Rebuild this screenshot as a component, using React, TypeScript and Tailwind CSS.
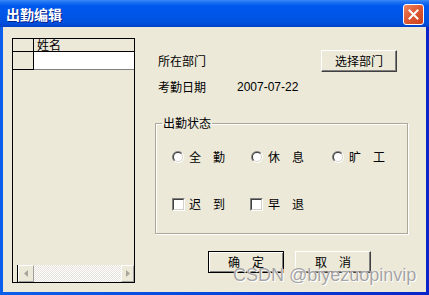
import React from "react";

const cjk = { fontFamily: '"Noto Sans CJK SC", "Noto Sans", sans-serif' };

function Btn({ children, def, className = "" }: { children: React.ReactNode; def?: boolean; className?: string }) {
  return (
    <div
      className={
        "h-[22px] w-[76px] flex items-center justify-center text-[12px] leading-[12px] text-black bg-[#ECE9D8] " +
        (def
          ? "border border-black shadow-[inset_1px_1px_0_#fff,inset_-1px_-1px_0_#808080] "
          : "border-t border-l border-t-white border-l-white border-r border-b border-r-[#404040] border-b-[#404040] shadow-[inset_-1px_-1px_0_#808080] ") +
        className
      }
    >
      {children}
    </div>
  );
}

function Radio() {
  return (
    <div className="relative w-[12px] h-[12px] shrink-0">
      <div className="absolute inset-0 rounded-full bg-[linear-gradient(135deg,#808080_0%,#808080_45%,#ffffff_55%,#ffffff_100%)]" />
      <div className="absolute inset-[1px] rounded-full bg-[linear-gradient(135deg,#404040_0%,#404040_45%,#D4D0C8_55%,#D4D0C8_100%)]" />
      <div className="absolute inset-[2px] rounded-full bg-white" />
    </div>
  );
}

function Check() {
  return (
    <div className="w-[13px] h-[13px] shrink-0 border-t border-l border-t-[#808080] border-l-[#808080] border-r border-b border-r-white border-b-white">
      <div className="w-full h-full bg-white border-t border-l border-t-[#404040] border-l-[#404040] border-r border-b border-r-[#D4D0C8] border-b-[#D4D0C8]" />
    </div>
  );
}

function ScrollBtn({ dir }: { dir: "l" | "r" }) {
  return (
    <div className="h-full flex items-center justify-center bg-[#ECE9D8] border-t border-l border-t-white border-l-white border-r border-b border-r-[#A0A0A0] border-b-[#A0A0A0]">
      <svg width="4" height="7" viewBox="0 0 4 7">
        {dir === "l" ? (
          <polygon points="4,0 0,3.5 4,7" fill="#A7A69A" />
        ) : (
          <polygon points="0,0 4,3.5 0,7" fill="#A7A69A" />
        )}
      </svg>
    </div>
  );
}

export default function App() {
  return (
    <div
      className="relative w-[429px] h-[295px] flex flex-col bg-[linear-gradient(to_right,#0B5FEA,#0646DC_50%,#0A24C8)] overflow-hidden"
      style={cjk}
    >
      {/* Title bar */}
      <div className="h-[27px] shrink-0 flex items-center justify-between pl-[6px] pr-[5px] bg-[linear-gradient(to_bottom,#3E8BF8_0%,#1E72F2_8%,#0058EE_22%,#0055E6_60%,#0050DC_85%,#0040C8_100%)]">
        <span className="text-white font-bold text-[14px] leading-[14px] [text-shadow:1px_1px_0_#0A1E88]">出勤编辑</span>
        <div className="w-[21px] h-[21px] mt-[1px] rounded-[3px] border border-white bg-[linear-gradient(135deg,#EE8560_0%,#E05A34_45%,#C8411C_100%)] flex items-center justify-center">
          <svg width="11" height="11" viewBox="0 0 11 11">
            <path d="M1.5 1.5 L9.5 9.5 M9.5 1.5 L1.5 9.5" stroke="white" strokeWidth="2" strokeLinecap="square" />
          </svg>
        </div>
      </div>

      {/* Body */}
      <div className="flex-1 mx-[3px] mb-[3px] bg-[#ECE9D8] flex text-black">
        {/* Grid */}
        <div className="ml-[9px] mt-[11px] w-[123px] h-[245px] border border-black flex flex-col">
          <div className="flex h-[13px] border-b border-black">
            <div className="w-[21px] border-r border-black" />
            <div className="flex-1 pl-[3px] text-[12px] leading-[12px]">姓名</div>
          </div>
          <div className="flex h-[18px]">
            <div className="w-[21px] border-r border-b border-black" />
            <div className="flex-1 bg-white border-b border-[#808080]" />
          </div>
          <div className="flex-1" />
          <div className="h-[17px] flex">
            <div className="w-[4px]" />
            <div className="w-[1px] bg-black" />
            <div className="w-[16px]">
              <ScrollBtn dir="l" />
            </div>
            <div className="flex-1 bg-[repeating-conic-gradient(#ffffff_0_25%,#E6E4DA_0_50%)] bg-[length:2px_2px]" />
            <div className="w-[13px]">
              <ScrollBtn dir="r" />
            </div>
          </div>
        </div>

        {/* Right column */}
        <div className="ml-[20px] w-[253px] flex flex-col">
          <div className="mt-[23px] h-[22px] flex items-center">
            <span className="pl-[3px] w-[166px] text-[12px] leading-[12px]">所在部门</span>
            <Btn>选择部门</Btn>
          </div>
          <div className="mt-[7px] h-[16px] flex items-center">
            <span className="pl-[3px] w-[82px] text-[12px] leading-[12px]">考勤日期</span>
            <span className="text-[12px] leading-[12px]" style={{ fontFamily: '"Liberation Sans", sans-serif' }}>2007-07-22</span>
          </div>

          <fieldset className="mt-[22px] h-[117px] border border-[#ACA899] shadow-[1px_1px_0_#fff,inset_1px_1px_0_#fff] px-0">
            <legend className="ml-[6px] px-[1px] text-[12px] leading-[12px]">出勤状态</legend>
            <div className="mt-[21px] h-[14px] flex items-center pl-[16px] text-[12px] leading-[12px]">
              <div className="w-[79px] flex items-center gap-[5px]">
                <Radio />
                <span>全　勤</span>
              </div>
              <div className="w-[81px] flex items-center gap-[5px]">
                <Radio />
                <span>休　息</span>
              </div>
              <div className="flex items-center gap-[5px]">
                <Radio />
                <span>旷　工</span>
              </div>
            </div>
            <div className="mt-[33px] h-[14px] flex items-center pl-[16px] text-[12px] leading-[12px]">
              <div className="w-[78px] flex items-center gap-[4px]">
                <Check />
                <span>迟　到</span>
              </div>
              <div className="flex items-center gap-[5px]">
                <Check />
                <span>早　退</span>
              </div>
            </div>
          </fieldset>

          <div className="mt-[17px] flex pl-[53px] gap-[11px]">
            <Btn def>确　定</Btn>
            <Btn>取　消</Btn>
          </div>
        </div>
      </div>

      {/* Watermark */}
      <div
        className="absolute left-[233px] top-[264px] text-[18px] leading-[22px] text-[#A4A4A4] [text-shadow:0_0_1px_#fff,1px_1px_0_#fff] whitespace-nowrap"
        style={{ fontFamily: '"Liberation Sans", Arial, sans-serif' }}
      >
        CSDN @biyezuopinvip
      </div>
    </div>
  );
}
